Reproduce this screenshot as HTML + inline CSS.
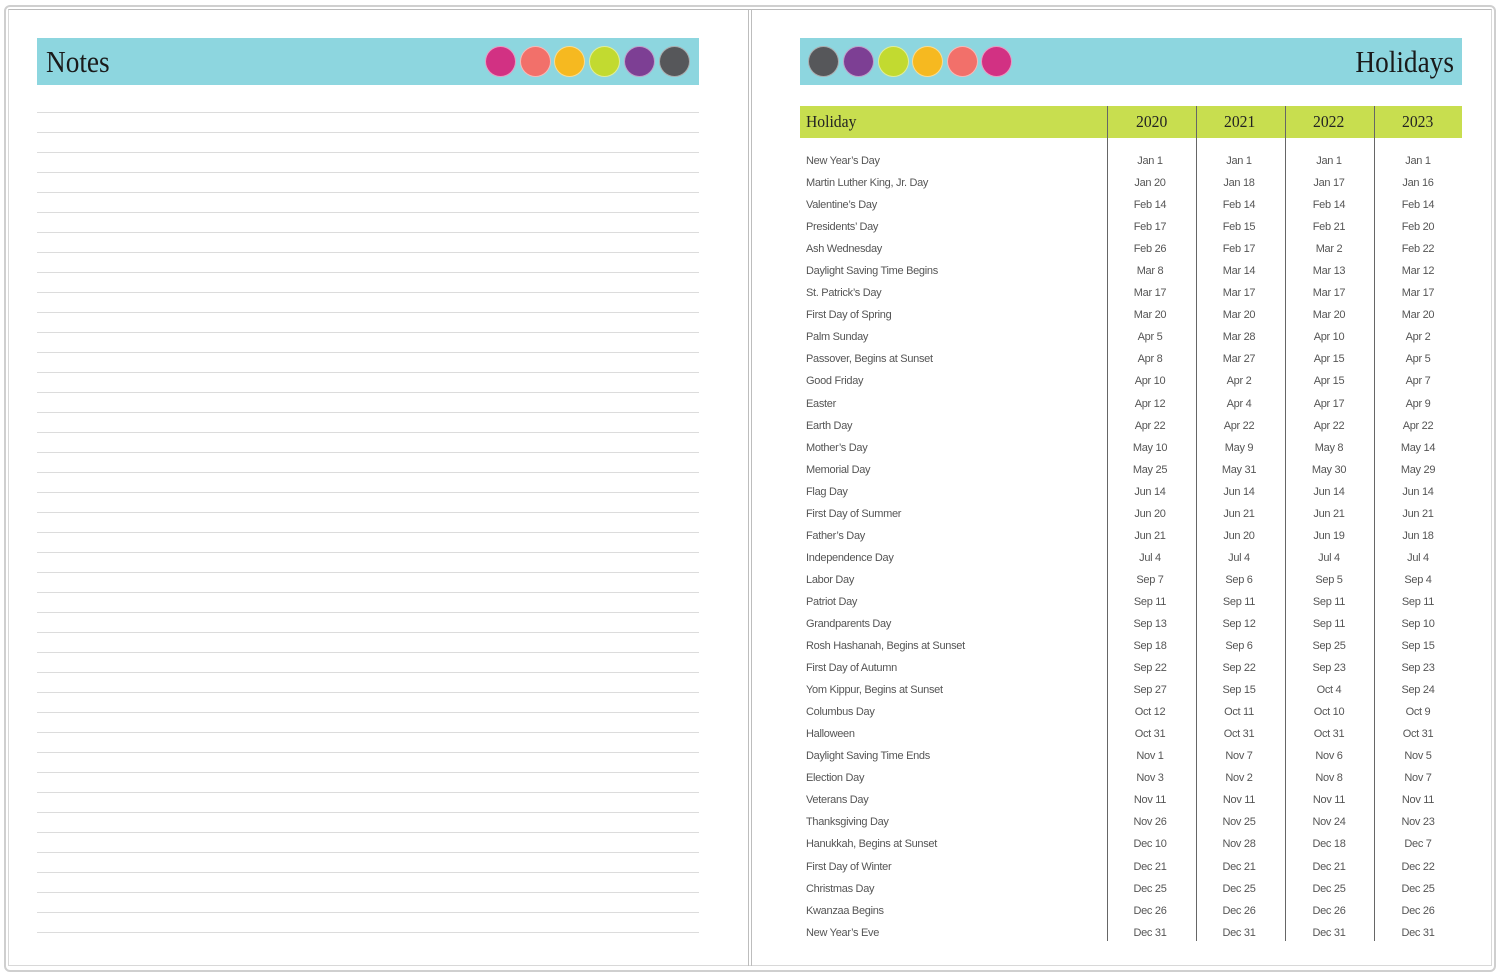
<!DOCTYPE html>
<html><head><meta charset="utf-8"><style>
*{margin:0;padding:0;box-sizing:border-box}
body{width:1500px;height:978px;background:#fff;position:relative;overflow:hidden;font-family:"Liberation Sans",sans-serif}
.abs{position:absolute}
.outer{left:4px;top:5px;width:1492px;height:967px;border:2px solid #cfcfcf;border-radius:6px}
.inner{left:8px;top:9px;width:1484px;height:957px;border:1px solid #d8d8d8;border-top-color:#bbb}
.spine{left:748px;top:9px;width:4px;height:957px;border-left:1px solid #bdbdbd;border-right:1px solid #bdbdbd}
.bar{background:#8dd6df;height:47px;top:38px}
.ttl{font-family:"Liberation Serif",serif;font-size:31px;color:#1a1a1a;top:44px;transform:scaleX(.88)}
.dot{width:31px;height:31px;border-radius:50%;top:46px;border:1px solid rgba(255,255,255,.5)}
.lines{left:37px;top:112px;width:662px;height:822px;background:repeating-linear-gradient(to bottom,#dcdcdc 0,#dcdcdc 1px,transparent 1px,transparent 20px)}
.gh{left:800px;top:106px;width:662px;height:32px;background:#c8de4f}
.gh span{position:absolute;top:6px;font-family:"Liberation Serif",serif;font-size:17px;color:#222;transform:scaleX(.92);transform-origin:left}
.vl{width:1px;background:#666;top:106px;height:835px}
.rows{left:800px;top:150px;width:662px}
.r{height:22.06px;line-height:22px;font-size:11px;color:#555;position:relative;letter-spacing:-.3px}
.r span{position:absolute;text-align:center;width:80px}
.r span:first-child{left:6px;text-align:left;width:300px}
.r span:nth-child(2){left:310px}
.r span:nth-child(3){left:399px}
.r span:nth-child(4){left:489px}
.r span:nth-child(5){left:578px}
</style></head><body>
<div class="abs outer"></div><div class="abs inner"></div><div class="abs spine"></div>
<div class="abs bar" style="left:37px;width:662px"></div>
<div class="abs ttl" style="left:46px;transform-origin:left">Notes</div>
<div class="abs dot" style="left:485px;background:#d23183"></div>
<div class="abs dot" style="left:520px;background:#f2706a"></div>
<div class="abs dot" style="left:554px;background:#f6b920"></div>
<div class="abs dot" style="left:589px;background:#c2da30"></div>
<div class="abs dot" style="left:624px;background:#7d3f94"></div>
<div class="abs dot" style="left:659px;background:#56575a"></div>
<div class="abs lines"></div>
<div class="abs bar" style="left:800px;width:662px"></div>
<div class="abs ttl" style="right:46px;transform-origin:right">Holidays</div>
<div class="abs dot" style="left:808px;background:#56575a"></div>
<div class="abs dot" style="left:843px;background:#7d3f94"></div>
<div class="abs dot" style="left:878px;background:#c2da30"></div>
<div class="abs dot" style="left:912px;background:#f6b920"></div>
<div class="abs dot" style="left:947px;background:#f2706a"></div>
<div class="abs dot" style="left:981px;background:#d23183"></div>
<div class="abs gh"><span style="left:6px">Holiday</span><span style="left:336px">2020</span><span style="left:424px">2021</span><span style="left:513px">2022</span><span style="left:602px">2023</span></div>
<div class="abs vl" style="left:1107px"></div><div class="abs vl" style="left:1196px"></div><div class="abs vl" style="left:1285px"></div><div class="abs vl" style="left:1374px"></div>
<div class="abs rows">
<div class="r"><span>New Year’s Day</span><span>Jan 1</span><span>Jan 1</span><span>Jan 1</span><span>Jan 1</span></div>
<div class="r"><span>Martin Luther King, Jr. Day</span><span>Jan 20</span><span>Jan 18</span><span>Jan 17</span><span>Jan 16</span></div>
<div class="r"><span>Valentine’s Day</span><span>Feb 14</span><span>Feb 14</span><span>Feb 14</span><span>Feb 14</span></div>
<div class="r"><span>Presidents’ Day</span><span>Feb 17</span><span>Feb 15</span><span>Feb 21</span><span>Feb 20</span></div>
<div class="r"><span>Ash Wednesday</span><span>Feb 26</span><span>Feb 17</span><span>Mar 2</span><span>Feb 22</span></div>
<div class="r"><span>Daylight Saving Time Begins</span><span>Mar 8</span><span>Mar 14</span><span>Mar 13</span><span>Mar 12</span></div>
<div class="r"><span>St. Patrick’s Day</span><span>Mar 17</span><span>Mar 17</span><span>Mar 17</span><span>Mar 17</span></div>
<div class="r"><span>First Day of Spring</span><span>Mar 20</span><span>Mar 20</span><span>Mar 20</span><span>Mar 20</span></div>
<div class="r"><span>Palm Sunday</span><span>Apr 5</span><span>Mar 28</span><span>Apr 10</span><span>Apr 2</span></div>
<div class="r"><span>Passover, Begins at Sunset</span><span>Apr 8</span><span>Mar 27</span><span>Apr 15</span><span>Apr 5</span></div>
<div class="r"><span>Good Friday</span><span>Apr 10</span><span>Apr 2</span><span>Apr 15</span><span>Apr 7</span></div>
<div class="r"><span>Easter</span><span>Apr 12</span><span>Apr 4</span><span>Apr 17</span><span>Apr 9</span></div>
<div class="r"><span>Earth Day</span><span>Apr 22</span><span>Apr 22</span><span>Apr 22</span><span>Apr 22</span></div>
<div class="r"><span>Mother’s Day</span><span>May 10</span><span>May 9</span><span>May 8</span><span>May 14</span></div>
<div class="r"><span>Memorial Day</span><span>May 25</span><span>May 31</span><span>May 30</span><span>May 29</span></div>
<div class="r"><span>Flag Day</span><span>Jun 14</span><span>Jun 14</span><span>Jun 14</span><span>Jun 14</span></div>
<div class="r"><span>First Day of Summer</span><span>Jun 20</span><span>Jun 21</span><span>Jun 21</span><span>Jun 21</span></div>
<div class="r"><span>Father’s Day</span><span>Jun 21</span><span>Jun 20</span><span>Jun 19</span><span>Jun 18</span></div>
<div class="r"><span>Independence Day</span><span>Jul 4</span><span>Jul 4</span><span>Jul 4</span><span>Jul 4</span></div>
<div class="r"><span>Labor Day</span><span>Sep 7</span><span>Sep 6</span><span>Sep 5</span><span>Sep 4</span></div>
<div class="r"><span>Patriot Day</span><span>Sep 11</span><span>Sep 11</span><span>Sep 11</span><span>Sep 11</span></div>
<div class="r"><span>Grandparents Day</span><span>Sep 13</span><span>Sep 12</span><span>Sep 11</span><span>Sep 10</span></div>
<div class="r"><span>Rosh Hashanah, Begins at Sunset</span><span>Sep 18</span><span>Sep 6</span><span>Sep 25</span><span>Sep 15</span></div>
<div class="r"><span>First Day of Autumn</span><span>Sep 22</span><span>Sep 22</span><span>Sep 23</span><span>Sep 23</span></div>
<div class="r"><span>Yom Kippur, Begins at Sunset</span><span>Sep 27</span><span>Sep 15</span><span>Oct 4</span><span>Sep 24</span></div>
<div class="r"><span>Columbus Day</span><span>Oct 12</span><span>Oct 11</span><span>Oct 10</span><span>Oct 9</span></div>
<div class="r"><span>Halloween</span><span>Oct 31</span><span>Oct 31</span><span>Oct 31</span><span>Oct 31</span></div>
<div class="r"><span>Daylight Saving Time Ends</span><span>Nov 1</span><span>Nov 7</span><span>Nov 6</span><span>Nov 5</span></div>
<div class="r"><span>Election Day</span><span>Nov 3</span><span>Nov 2</span><span>Nov 8</span><span>Nov 7</span></div>
<div class="r"><span>Veterans Day</span><span>Nov 11</span><span>Nov 11</span><span>Nov 11</span><span>Nov 11</span></div>
<div class="r"><span>Thanksgiving Day</span><span>Nov 26</span><span>Nov 25</span><span>Nov 24</span><span>Nov 23</span></div>
<div class="r"><span>Hanukkah, Begins at Sunset</span><span>Dec 10</span><span>Nov 28</span><span>Dec 18</span><span>Dec 7</span></div>
<div class="r"><span>First Day of Winter</span><span>Dec 21</span><span>Dec 21</span><span>Dec 21</span><span>Dec 22</span></div>
<div class="r"><span>Christmas Day</span><span>Dec 25</span><span>Dec 25</span><span>Dec 25</span><span>Dec 25</span></div>
<div class="r"><span>Kwanzaa Begins</span><span>Dec 26</span><span>Dec 26</span><span>Dec 26</span><span>Dec 26</span></div>
<div class="r"><span>New Year’s Eve</span><span>Dec 31</span><span>Dec 31</span><span>Dec 31</span><span>Dec 31</span></div>
</div>
</body></html>
